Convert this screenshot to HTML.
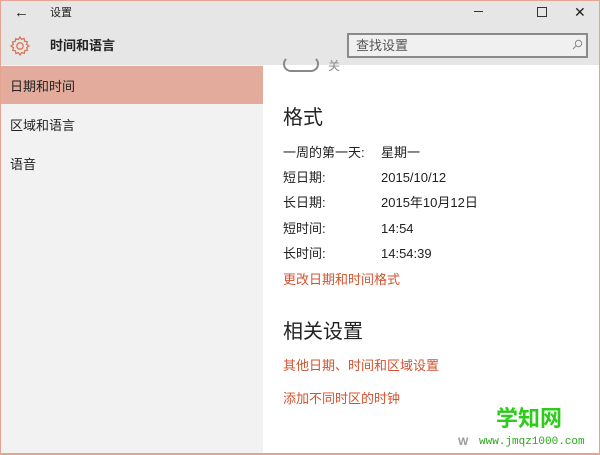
<!DOCTYPE html>
<html><head><meta charset="utf-8"><style>
*{margin:0;padding:0;box-sizing:border-box}
body{width:600px;height:455px;overflow:hidden;font-family:"Liberation Sans","Noto Sans CJK SC",sans-serif;color:#222;background:#e6e6e6;position:relative}
.frame{position:absolute;inset:0;border:1px solid #e3a491;border-bottom-width:2px;pointer-events:none;z-index:10}
.abs{position:absolute;white-space:nowrap;line-height:16px}
.side{position:absolute;left:1px;top:65px;width:262px;height:388px;background:#f2f2f2}
.content{position:absolute;left:263px;top:65px;width:336px;height:388px;background:#fff}
.sel{position:absolute;left:1px;top:66px;width:262px;height:38px;background:#e2ab9b}
.t13{font-size:13px}
.link{color:#d2532e;font-size:13px}
.h{font-size:20px;line-height:24px}
</style></head><body>
<div class="frame"></div>
<div class="abs" style="left:14px;top:5px;font-size:15px">&#8592;</div>
<div class="abs" style="left:50px;top:5px;font-size:11px">设置</div>
<div class="abs" style="left:474px;top:11px;width:9px;height:1px;background:#333"></div>
<div class="abs" style="left:537px;top:7px;width:10px;height:10px;border:1px solid #333"></div>
<div class="abs" style="left:574px;top:4px;font-size:14px">&#10005;</div>
<svg class="abs" style="left:9px;top:35px" width="22" height="22" viewBox="0 0 22 22">
<path d="M11 2l1.5 2.3 2.6-.8.5 2.7 2.7.5-.8 2.6L20 11l-2.3 1.5.8 2.6-2.7.5-.5 2.7-2.6-.8L11 20l-1.5-2.3-2.6.8-.5-2.7-2.7-.5.8-2.6L2 11l2.3-1.5-.8-2.6 2.7-.5.5-2.7 2.6.8z" fill="none" stroke="#d9775a" stroke-width="1.3"/>
<circle cx="11" cy="11" r="3.2" fill="none" stroke="#d9775a" stroke-width="1.3"/></svg>
<div class="abs" style="left:50px;top:38px;font-size:13px;font-weight:bold">时间和语言</div>
<div class="abs" style="left:347px;top:33px;width:241px;height:25px;border:2px solid #8a8a8a;background:#f0f0f0"></div>
<div class="abs" style="left:356px;top:38px;font-size:13px;color:#555">查找设置</div>
<svg class="abs" style="left:572px;top:39px" width="11" height="11" viewBox="0 0 11 11"><circle cx="6.5" cy="4.5" r="3.2" fill="none" stroke="#888"/><path d="M4.2 6.8L1 10" stroke="#888"/></svg>
<div class="side"></div>
<div class="sel"></div>
<div class="abs t13" style="left:10px;top:79px">日期和时间</div>
<div class="abs t13" style="left:10px;top:118px">区域和语言</div>
<div class="abs t13" style="left:10px;top:157px">语音</div>
<div class="content"></div>
<div class="abs" style="left:283px;top:56px;width:36px;height:16px;border:2px solid #888;border-radius:8px;border-top-color:transparent"></div>
<div class="abs" style="left:328px;top:58px;font-size:12px;color:#888">关</div>
<div class="abs h" style="left:283px;top:106px">格式</div>
<div class="abs t13" style="left:283px;top:145px">一周的第一天:</div><div class="abs t13" style="left:381px;top:145px">星期一</div>
<div class="abs t13" style="left:283px;top:170px">短日期:</div><div class="abs t13" style="left:381px;top:170px">2015/10/12</div>
<div class="abs t13" style="left:283px;top:195px">长日期:</div><div class="abs t13" style="left:381px;top:195px">2015年10月12日</div>
<div class="abs t13" style="left:283px;top:221px">短时间:</div><div class="abs t13" style="left:381px;top:221px">14:54</div>
<div class="abs t13" style="left:283px;top:246px">长时间:</div><div class="abs t13" style="left:381px;top:246px">14:54:39</div>
<div class="abs link" style="left:283px;top:272px">更改日期和时间格式</div>
<div class="abs h" style="left:283px;top:320px">相关设置</div>
<div class="abs link" style="left:283px;top:358px">其他日期、时间和区域设置</div>
<div class="abs link" style="left:283px;top:391px">添加不同时区的时钟</div>
<div class="abs" style="left:496px;top:406px;font-size:22px;line-height:26px;font-weight:bold;color:#2ecc1a">学知网</div>
<div class="abs" style="left:458px;top:434px;font-size:11px;color:#999;font-weight:bold">W</div>
<div class="abs" style="left:479px;top:434px;font-size:11px;color:#2aa81a;font-family:'Liberation Mono',monospace">www.jmqz1000.com</div>
</body></html>
